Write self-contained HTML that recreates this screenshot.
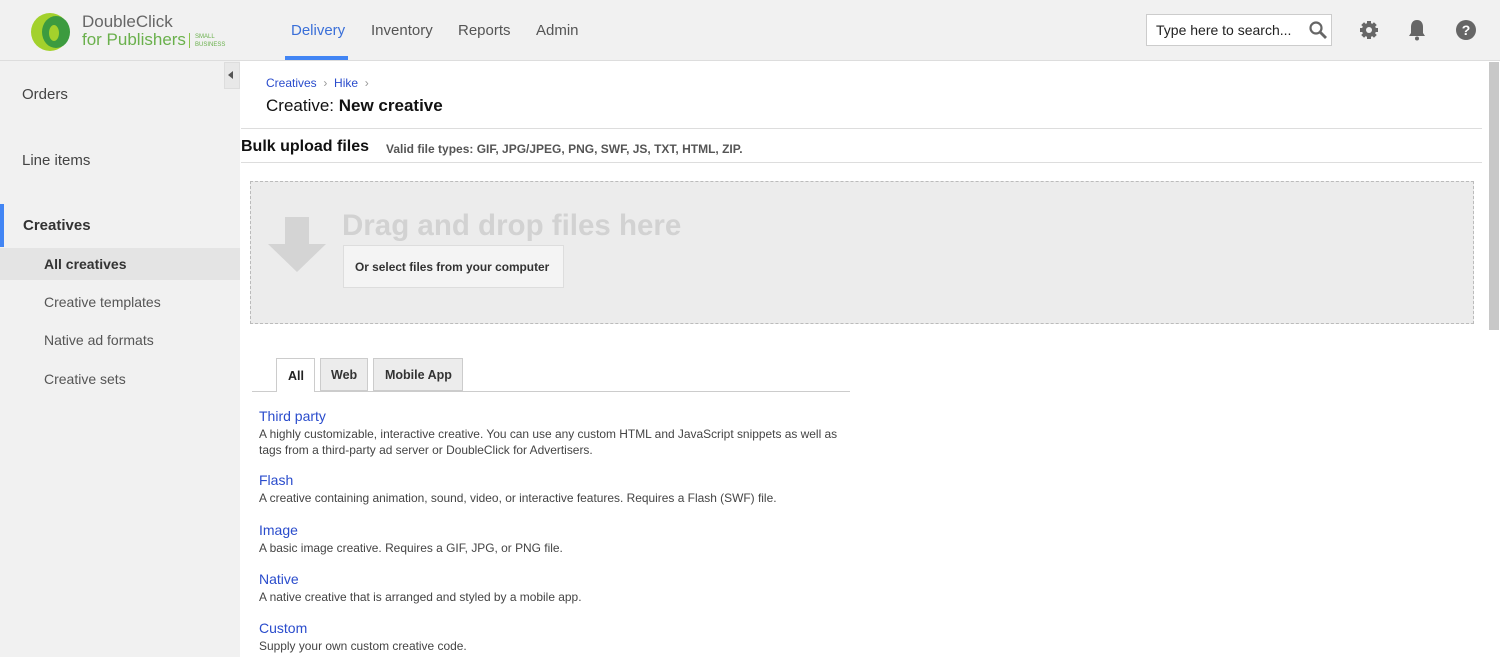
<!DOCTYPE html>
<html><head><meta charset="utf-8"><style>
*{margin:0;padding:0;box-sizing:border-box}
body{width:1500px;height:657px;overflow:hidden;background:#fff;font-family:"Liberation Sans",Arial,sans-serif;position:relative;color:#222}
.a{position:absolute;white-space:nowrap}
#hdr{left:0;top:0;width:1500px;height:61px;background:#f1f1f1;border-bottom:1px solid #ddd}
#side{left:0;top:61px;width:240px;height:596px;background:#f1f1f1}
.nav{font-size:15px;color:#444}
.sub{font-size:14px;color:#555}
.lnk{font-size:14px;color:#2a4ccc}
.desc{font-size:11.95px;color:#444;line-height:16px}
</style></head><body>
<div class="a" id="hdr"></div>
<svg class="a" style="left:30px;top:12px" width="46" height="40" viewBox="0 0 46 40">
<circle cx="20" cy="20" r="19" fill="#a3d12c"/>
<ellipse cx="26" cy="20" rx="14" ry="16" fill="#3c9b3f"/>
<ellipse cx="24" cy="21" rx="5" ry="8" fill="#a3d12c"/>
</svg>
<div class="a" style="left:82px;top:13px;font-size:17px;color:#666;line-height:18px">DoubleClick</div>
<div class="a" style="left:82px;top:31px;font-size:17px;color:#6ab04c;line-height:18px">for Publishers</div>
<div class="a" style="left:189px;top:33px;width:1px;height:15px;background:#8bc34a"></div>
<div class="a" style="left:195px;top:33px;font-size:6px;color:#6ab04c;line-height:8px">SMALL<br>BUSINESS</div>
<div class="a" style="left:291px;top:22px;font-size:15px;color:#3a6fd8">Delivery</div>
<div class="a" style="left:285px;top:56px;width:63px;height:4px;background:#4285f4"></div>
<div class="a" style="left:371px;top:22px;font-size:15px;color:#555">Inventory</div>
<div class="a" style="left:458px;top:22px;font-size:15px;color:#555">Reports</div>
<div class="a" style="left:536px;top:22px;font-size:15px;color:#555">Admin</div>
<div class="a" style="left:1146px;top:14px;width:186px;height:32px;background:#fff;border:1px solid #ccc"></div>
<div class="a" style="left:1156px;top:22px;font-size:14px;color:#222">Type here to search...</div>
<svg class="a" style="left:1308px;top:20px" width="20" height="20" viewBox="0 0 20 20"><circle cx="8" cy="8" r="5.5" fill="none" stroke="#666" stroke-width="2.2"/><path d="M12 12l6 6" stroke="#666" stroke-width="2.8"/></svg>
<svg class="a" style="left:1359px;top:20px" width="20" height="20" viewBox="0 0 20 20"><g fill="#666"><circle cx="10" cy="10" r="7"/><rect x="8" y="1" width="4" height="18"/><rect x="1" y="8" width="18" height="4"/><rect x="8" y="1" width="4" height="18" transform="rotate(45 10 10)"/><rect x="8" y="1" width="4" height="18" transform="rotate(-45 10 10)"/></g><circle cx="10" cy="10" r="3" fill="#f1f1f1"/></svg>
<svg class="a" style="left:1406px;top:18px" width="22" height="24" viewBox="0 0 22 24"><path d="M11 2c-4 0-6 3-6 7v6l-2 3h16l-2-3V9c0-4-2-7-6-7z" fill="#666"/><circle cx="11" cy="20.5" r="2" fill="#666"/></svg>
<svg class="a" style="left:1455px;top:19px" width="22" height="22" viewBox="0 0 22 22"><circle cx="11" cy="11" r="10" fill="#666"/><text x="11" y="16" text-anchor="middle" font-family="Liberation Sans" font-weight="bold" font-size="14" fill="#fff">?</text></svg>

<div class="a" id="side"></div>
<div class="a" style="left:224px;top:62px;width:16px;height:27px;background:#e8e8e8;border:1px solid #ddd"></div>
<div class="a" style="left:228px;top:71px;width:0;height:0;border-top:4px solid transparent;border-bottom:4px solid transparent;border-right:5px solid #555"></div>
<div class="a nav" style="left:22px;top:86px">Orders</div>
<div class="a nav" style="left:22px;top:152px">Line items</div>
<div class="a" style="left:0;top:204px;width:4px;height:43px;background:#4285f4"></div>
<div class="a nav" style="left:23px;top:217px;font-weight:bold;color:#333">Creatives</div>
<div class="a" style="left:0;top:248px;width:240px;height:32px;background:#e4e4e4"></div>
<div class="a sub" style="left:44px;top:256px;font-weight:bold;color:#333">All creatives</div>
<div class="a sub" style="left:44px;top:294px">Creative templates</div>
<div class="a sub" style="left:44px;top:332px">Native ad formats</div>
<div class="a sub" style="left:44px;top:371px">Creative sets</div>

<div class="a" style="left:1489px;top:62px;width:10px;height:268px;background:#c8c8c8"></div>
<div class="a" style="left:266px;top:76px;font-size:12px;color:#2a4ccc">Creatives <span style="color:#999">&nbsp;›&nbsp;</span> Hike <span style="color:#999">&nbsp;›</span></div>
<div class="a" style="left:266px;top:96px;font-size:17px;color:#111">Creative: <b>New creative</b></div>
<div class="a" style="left:241px;top:128px;width:1241px;height:1px;background:#ddd"></div>
<div class="a" style="left:241px;top:138px;font-size:16px;font-weight:bold;color:#111">Bulk upload files</div>
<div class="a" style="left:386px;top:142px;font-size:12px;font-weight:bold;color:#555">Valid file types: GIF, JPG/JPEG, PNG, SWF, JS, TXT, HTML, ZIP.</div>
<div class="a" style="left:241px;top:162px;width:1241px;height:1px;background:#ddd"></div>
<div class="a" style="left:250px;top:181px;width:1224px;height:143px;background:#ececec;border:1px dashed #bbb"></div>
<svg class="a" style="left:267px;top:217px" width="60" height="56" viewBox="0 0 60 56"><path d="M18 0h24v27h17L30 55 1 27h17z" fill="#d4d4d4"/></svg>
<div class="a" style="left:342px;top:209px;font-size:29.5px;font-weight:bold;color:#d2d2d2">Drag and drop files here</div>
<div class="a" style="left:343px;top:245px;width:221px;height:43px;background:#f4f4f4;border:1px solid #ddd"></div>
<div class="a" style="left:355px;top:260px;font-size:11.9px;font-weight:bold;color:#333">Or select files from your computer</div>

<div class="a" style="left:252px;top:391px;width:598px;height:1px;background:#ccc"></div>
<div class="a" style="left:276px;top:358px;width:39px;height:34px;background:#fff;border:1px solid #ccc;border-bottom:none"></div>
<div class="a" style="left:288px;top:369px;font-size:12.5px;font-weight:bold;color:#222">All</div>
<div class="a" style="left:320px;top:358px;width:48px;height:33px;background:#ececec;border:1px solid #ccc"></div>
<div class="a" style="left:331px;top:368px;font-size:12.5px;font-weight:bold;color:#333">Web</div>
<div class="a" style="left:373px;top:358px;width:90px;height:33px;background:#ececec;border:1px solid #ccc"></div>
<div class="a" style="left:385px;top:368px;font-size:12.5px;font-weight:bold;color:#333">Mobile App</div>

<div class="a lnk" style="left:259px;top:408px">Third party</div>
<div class="a desc" style="left:259px;top:426px">A highly customizable, interactive creative. You can use any custom HTML and JavaScript snippets as well as<br>tags from a third-party ad server or DoubleClick for Advertisers.</div>
<div class="a lnk" style="left:259px;top:472px">Flash</div>
<div class="a desc" style="left:259px;top:490px">A creative containing animation, sound, video, or interactive features. Requires a Flash (SWF) file.</div>
<div class="a lnk" style="left:259px;top:522px">Image</div>
<div class="a desc" style="left:259px;top:540px">A basic image creative. Requires a GIF, JPG, or PNG file.</div>
<div class="a lnk" style="left:259px;top:571px">Native</div>
<div class="a desc" style="left:259px;top:589px">A native creative that is arranged and styled by a mobile app.</div>
<div class="a lnk" style="left:259px;top:620px">Custom</div>
<div class="a desc" style="left:259px;top:638px">Supply your own custom creative code.</div>
</body></html>
